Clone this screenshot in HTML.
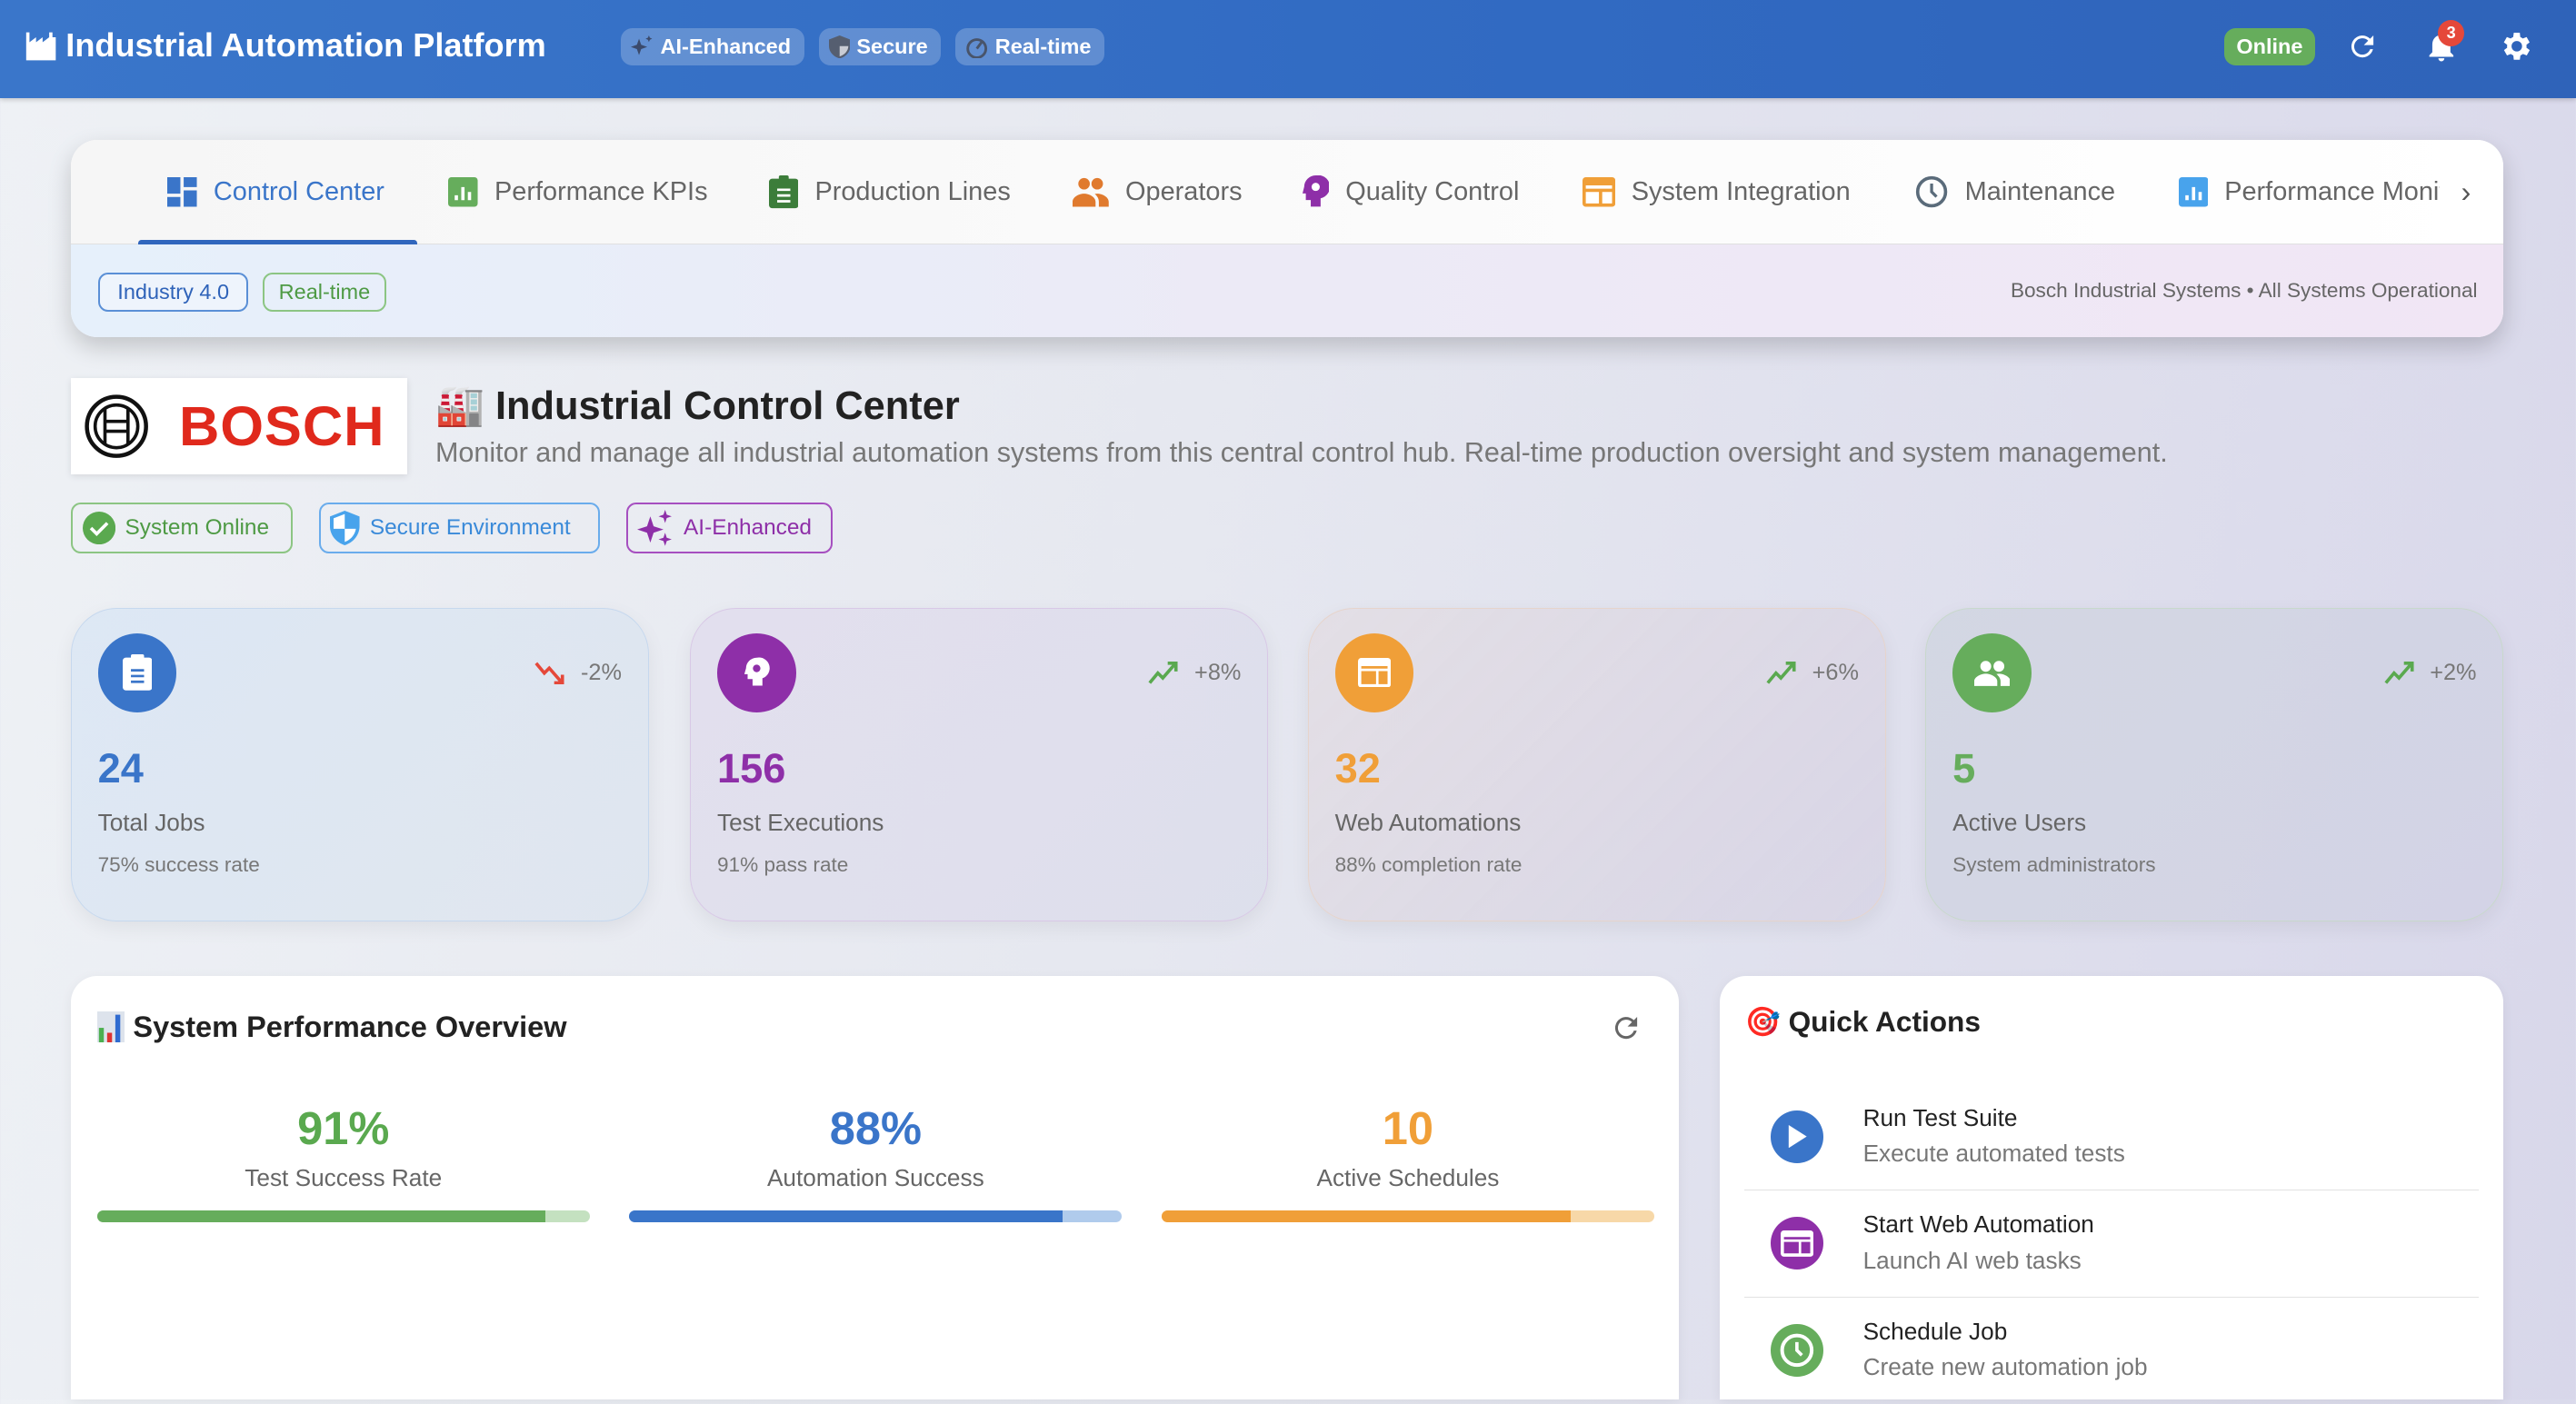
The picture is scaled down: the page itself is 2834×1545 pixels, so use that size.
<!DOCTYPE html>
<html><head><meta charset="utf-8"><style>
html{zoom:1.80740}
*{box-sizing:border-box;margin:0;padding:0}
body{width:1568px;height:852px;overflow:hidden;font-family:"Liberation Sans","DejaVu Sans",sans-serif;background:linear-gradient(100deg,#eef1f5 0%,#e6e8f0 45%,#d8d7ea 100%);position:relative}
.abs{position:absolute}
.hdr{left:0;top:0;width:1568px;height:60px;background:linear-gradient(90deg,#3a76ca,#316ac2 60%,#2f63b9);box-shadow:0 1px 3px rgba(0,0,0,.2)}
.chips{position:absolute;left:378px;top:17px;display:flex;gap:9px}
.chip{height:23px;border-radius:7px;background:rgba(255,255,255,.22);color:#fff;font-size:13px;font-weight:bold;display:flex;align-items:center;padding:0 8px 0 6px;gap:4px;white-space:nowrap}
.nav{left:43px;top:85px;width:1481px;height:120px;border-radius:16px;background:#fff;box-shadow:0 6px 14px rgba(0,0,0,.18);overflow:hidden}
.tabs{height:64px;background:linear-gradient(90deg,#f6f6f6,#fff);border-bottom:1px solid #e0e0e0;position:relative}
.tab{position:absolute;top:0;height:64px;display:flex;align-items:center;font-size:16px;color:#666;gap:10px;white-space:nowrap}
.sub{height:56px;background:linear-gradient(90deg,#e6f0fb,#eceaf6 50%,#f1e6f5)}
.tg{position:absolute;top:81px;height:24px;border-radius:6px;font-size:13px;display:flex;align-items:center;justify-content:center}
.badge{position:absolute;top:306px;height:31px;border-radius:6px;font-size:13.5px;display:flex;align-items:center;gap:6px;padding-left:6px;white-space:nowrap}
.card{position:absolute;top:370px;width:352px;height:191px;border-radius:28px;box-shadow:0 4px 12px rgba(0,0,0,.06)}
.ic{position:absolute;left:16px;top:15px;width:48px;height:48px;border-radius:50%;display:flex;align-items:center;justify-content:center}
.tr{position:absolute;right:16px;top:31px;font-size:14px;color:#777;display:flex;align-items:center;gap:8px}
.num{position:absolute;left:16px;top:83px;font-size:25px;font-weight:bold}
.lab{position:absolute;left:16px;top:122px;font-size:14.5px;color:#666}
.sl{position:absolute;left:16px;top:149px;font-size:12.5px;color:#777}
.panel{position:absolute;top:594px;background:#fff;border-radius:16px;height:258px;border-bottom-left-radius:0;border-bottom-right-radius:0;box-shadow:0 2px 8px rgba(0,0,0,.06)}
.col{position:absolute;top:672px;width:300px;text-align:center}
.col .n{font-size:28px;font-weight:bold;line-height:30px}
.col .l{font-size:14.5px;color:#666;margin-top:7px}
.bar{position:absolute;top:737px;width:300px;height:7px;border-radius:4px;overflow:hidden}
.qa{position:absolute;left:1062px;width:447px;height:65px}
.qa .c{position:absolute;left:16px;top:16px;width:32px;height:32px;border-radius:50%;display:flex;align-items:center;justify-content:center}
.qa .t{position:absolute;left:72px;top:12px;font-size:14.5px;color:#222}
.qa .s{position:absolute;left:72px;top:34px;font-size:14.5px;color:#777}
</style></head><body>
<div class="abs hdr">
 <div class="abs" style="left:15px;top:16px;display:flex;align-items:center;gap:5px;color:#fff;font-size:20px;font-weight:bold">
  <svg width="20" height="20" viewBox="0 0 20 20"><path d="M1 19V2h2v6l4-3v3l4-3v3l4-3V2h2v3h2v14z" fill="#fff"/></svg>Industrial Automation Platform</div>
 <div class="chips">
 <div class="chip"><svg width="14" height="14" viewBox="0 0 14 14"><path d="M5 2l1.3 3.7L10 7l-3.7 1.3L5 12 3.7 8.3 0 7l3.7-1.3zM11 0l.6 1.4L13 2l-1.4.6L11 4l-.6-1.4L9 2l1.4-.6z" fill="#3b4a6b"/></svg>AI-Enhanced</div>
 <div class="chip"><svg width="13" height="14" viewBox="0 0 13 14"><path d="M6.5 0L0 2.5v4c0 3.5 2.8 6.6 6.5 7.5 3.7-.9 6.5-4 6.5-7.5v-4z" fill="#555e70"/><path d="M6.5 1.2v11.6c2.9-.9 5.2-3.3 5.3-6.3H6.5z" fill="#c9ccd4"/></svg>Secure</div>
 <div class="chip"><svg width="14" height="14" viewBox="0 0 14 14"><circle cx="7" cy="8" r="5.5" fill="none" stroke="#48546a" stroke-width="1.6"/><path d="M7 8l3-4" stroke="#48546a" stroke-width="1.6"/></svg>Real-time</div>
 </div>
 <div class="chip abs" style="left:1354px;top:17px;width:55px;background:#66ad5c;justify-content:center;padding:0">Online</div>
 <svg class="abs" style="left:1428px;top:18px" width="20" height="20" viewBox="0 0 24 24"><path d="M17.6 6.4A8 8 0 1 0 19.7 14h-2.1a6 6 0 1 1-1.4-6.2L13 11h7V4z" fill="#fff"/></svg>
 <svg class="abs" style="left:1475px;top:17px" width="22" height="22" viewBox="0 0 24 24"><path d="M12 22a2 2 0 0 0 2-2h-4a2 2 0 0 0 2 2zm6-6v-5c0-3.1-1.6-5.6-4.5-6.3V4a1.5 1.5 0 0 0-3 0v.7C7.6 5.4 6 7.9 6 11v5l-2 2v1h16v-1z" fill="#fff"/></svg>
 <div class="abs" style="left:1484px;top:12px;width:16px;height:16px;border-radius:50%;background:#e5483a;color:#fff;font-size:10px;font-weight:bold;text-align:center;line-height:16px">3</div>
 <svg class="abs" style="left:1521px;top:17px" width="22" height="22" viewBox="0 0 24 24"><path d="M19.4 13a7.5 7.5 0 0 0 0-2l2.1-1.6-2-3.5-2.5 1a7.6 7.6 0 0 0-1.7-1L15 3h-4l-.4 2.9a7.6 7.6 0 0 0-1.7 1l-2.5-1-2 3.5L6.6 11a7.5 7.5 0 0 0 0 2l-2.1 1.6 2 3.5 2.5-1a7.6 7.6 0 0 0 1.7 1L11 21h4l.4-2.9a7.6 7.6 0 0 0 1.7-1l2.5 1 2-3.5zM13 15.5a3.5 3.5 0 1 1 0-7 3.5 3.5 0 0 1 0 7z" fill="#fff" transform="translate(-1 0)"/></svg>
</div>

<div class="abs nav">
 <div class="tabs">
  <div class="tab" style="left:59px;color:#3a75c9"><svg width="18" height="18" viewBox="0 0 18 18"><path d="M0 0h8v10H0zM10 0h8v6h-8zM10 8h8v10h-8zM0 12h8v6H0z" fill="#3a75c9"/></svg>Control Center</div>
  <div class="abs" style="left:41px;top:61px;width:170px;height:3px;background:#3066bd;border-radius:2px 2px 0 0"></div>
  <div class="tab" style="left:230px"><svg width="18" height="18" viewBox="0 0 18 18"><rect width="18" height="18" rx="2" fill="#66ad5c"/><path d="M4 14v-3h2v3zM8 14V6h2v8zM12 14V9h2v5z" fill="#fff"/></svg>Performance KPIs</div>
  <div class="tab" style="left:425px"><svg width="18" height="20" viewBox="0 0 18 20"><rect y="2" width="18" height="18" rx="2" fill="#3c7d3a"/><rect x="6" y="0" width="6" height="4" rx="1" fill="#3c7d3a"/><path d="M5 8h8v1.5H5zM5 11.5h8V13H5zM5 15h8v1.5H5z" fill="#fff"/></svg>Production Lines</div>
  <div class="tab" style="left:610px"><svg width="22" height="18" viewBox="0 0 22 18"><circle cx="7" cy="4" r="3.5" fill="#e07a2e"/><circle cx="15" cy="4" r="3.5" fill="#e07a2e"/><path d="M0 18v-3c0-3 4-5 7-5s7 2 7 5v3zM15 10c3 0 7 2 7 5v3h-6v-3c0-2-1-3.5-2.5-4.8z" fill="#e07a2e"/></svg>Operators</div>
  <div class="tab" style="left:750px"><svg width="16" height="20" viewBox="0 0 16 20"><path d="M8 0a7 7 0 0 0-7 7l-1 4h2v4h3v4h6v-5a7 7 0 0 0-3-14z" fill="#8e2fa8"/><circle cx="8" cy="7" r="2.5" fill="#fff"/></svg>Quality Control</div>
  <div class="tab" style="left:920px"><svg width="20" height="18" viewBox="0 0 20 18"><rect width="20" height="18" rx="2" fill="#f09f38"/><path d="M2 5h16v2H2zM2 9h8v7H2zM12 9h6v7h-6z" fill="#fff"/></svg>System Integration</div>
  <div class="tab" style="left:1123px"><svg width="20" height="20" viewBox="0 0 20 20"><circle cx="10" cy="10" r="8.5" fill="none" stroke="#5a6b7a" stroke-width="2"/><path d="M10 5v5l3 3" fill="none" stroke="#5a6b7a" stroke-width="1.8"/></svg>Maintenance</div>
  <div class="tab" style="left:1283px"><svg width="18" height="18" viewBox="0 0 18 18"><rect width="18" height="18" rx="2" fill="#48a3ec"/><path d="M4 14v-3h2v3zM8 14V6h2v8zM12 14V9h2v5z" fill="#fff"/></svg><span style="width:131px;overflow:hidden;white-space:nowrap">Performance Monitoring</span></div>
  <div class="tab" style="left:1455px;font-size:18px;color:#555">›</div>
 </div>
 <div class="sub"></div>
 <div class="tg" style="left:17px;width:91px;border:1.5px solid #5a8fd6;color:#2f63b9;background:#eef4fc">Industry 4.0</div>
 <div class="tg" style="left:117px;width:75px;border:1.5px solid #8cc583;color:#4e9a44">Real-time</div>
 <div class="abs" style="right:16px;top:85px;font-size:12.5px;color:#666">Bosch Industrial Systems • All Systems Operational</div>
</div>

<div class="abs" style="left:43px;top:230px;width:205px;height:59px;background:#fff;box-shadow:0 1px 4px rgba(0,0,0,.1);display:flex;align-items:center">
 <svg style="margin-left:8px" width="40" height="40" viewBox="0 0 40 40"><circle cx="20" cy="20" r="18" fill="none" stroke="#111" stroke-width="2.5"/><circle cx="20" cy="20" r="13" fill="none" stroke="#111" stroke-width="2"/><path d="M13 9v22M27 9v22M13 17h14M13 23h14" stroke="#111" stroke-width="2" fill="none"/></svg>
 <span style="margin-left:18px;font-size:34px;font-weight:bold;color:#e0291c;letter-spacing:.5px">BOSCH</span></div>
<div class="abs" style="left:265px;top:233px;font-size:24px;font-weight:bold;color:#222">🏭 Industrial Control Center</div>
<div class="abs" style="left:265px;top:266px;font-size:16.9px;color:#777">Monitor and manage all industrial automation systems from this central control hub. Real-time production oversight and system management.</div>

<div class="badge" style="left:43px;width:135px;border:1.5px solid #8cc583;color:#4e9a44"><svg width="20" height="20" viewBox="0 0 20 20"><circle cx="10" cy="10" r="10" fill="#5aa94f"/><path d="M5 10l3.5 3.5L15 7" fill="none" stroke="#fff" stroke-width="2"/></svg>System Online</div>
<div class="badge" style="left:194px;width:171px;border:1.5px solid #6aacec;color:#3a8ad9"><svg width="18" height="21" viewBox="0 0 18 21"><path d="M9 0L0 3.5v6C0 15 4 19.5 9 21c5-1.5 9-6 9-11.5v-6z" fill="#48a3ec"/><path d="M9 2v9H2.2V4.6zM9 11h6.8c-.6 3.8-3.3 6.8-6.8 8z" fill="#fff"/></svg>Secure Environment</div>
<div class="badge" style="left:381px;width:126px;border:1.5px solid #a64fc0;color:#8e2fa8"><svg width="22" height="22" viewBox="0 0 22 22"><path d="M8 4l2 6 6 2-6 2-2 6-2-6-6-2 6-2zM17 0l1 3 3 1-3 1-1 3-1-3-3-1 3-1zM17 14l1 3 3 1-3 1-1 3-1-3-3-1 3-1z" fill="#8e2fa8"/></svg>AI-Enhanced</div>

<div class="card" style="left:43px;background:linear-gradient(135deg,rgba(214,228,244,.7),rgba(220,228,238,.7));border:1px solid #c6d8ee">
 <div class="ic" style="background:#3a75c9"><svg width="18" height="22" viewBox="0 0 18 22"><rect y="2" width="18" height="20" rx="2" fill="#fff"/><rect x="5" y="0" width="8" height="4" rx="1" fill="#fff"/><path d="M5 9h8v1.5H5zM5 12.5h8V14H5zM5 16h8v1.5H5z" fill="#3a75c9"/></svg></div>
 <div class="tr"><svg width="20" height="14" viewBox="0 0 20 14"><path d="M1 1l5 6 3-3 7 8M12 13h5V8" fill="none" stroke="#e5483a" stroke-width="2"/></svg>-2%</div>
 <div class="num" style="color:#3a75c9">24</div><div class="lab">Total Jobs</div><div class="sl">75% success rate</div></div>
<div class="card" style="left:420px;background:linear-gradient(135deg,rgba(224,218,236,.7),rgba(218,220,234,.7));border:1px solid #d8c8e6">
 <div class="ic" style="background:#8e2fa8"><svg width="16" height="20" viewBox="0 0 16 20"><path d="M8 1a6.5 6.5 0 0 0-6.5 6.5L.5 11h2v3h3v4h6v-4.5A6.5 6.5 0 0 0 8 1z" fill="#fff"/><circle cx="8" cy="7.5" r="2.3" fill="#8e2fa8"/></svg></div>
 <div class="tr"><svg width="20" height="14" viewBox="0 0 20 14"><path d="M1 13l5-6 3 3 7-8M12 1h5v5" fill="none" stroke="#5aa94f" stroke-width="2"/></svg>+8%</div>
 <div class="num" style="color:#8e2fa8">156</div><div class="lab">Test Executions</div><div class="sl">91% pass rate</div></div>
<div class="card" style="left:796px;background:linear-gradient(135deg,rgba(226,218,222,.6),rgba(214,210,228,.7));border:1px solid #e6d4cc">
 <div class="ic" style="background:#f09f38"><svg width="20" height="18" viewBox="0 0 20 18"><rect width="20" height="18" rx="2" fill="#fff"/><path d="M2 5h16v1.5H2zM2 8h9v8H2zM12.5 8H18v8h-5.5z" fill="#f09f38"/></svg></div>
 <div class="tr"><svg width="20" height="14" viewBox="0 0 20 14"><path d="M1 13l5-6 3 3 7-8M12 1h5v5" fill="none" stroke="#5aa94f" stroke-width="2"/></svg>+6%</div>
 <div class="num" style="color:#f09f38">32</div><div class="lab">Web Automations</div><div class="sl">88% completion rate</div></div>
<div class="card" style="left:1172px;background:linear-gradient(135deg,rgba(206,212,222,.7),rgba(208,208,228,.7));border:1px solid #c8d8cc">
 <div class="ic" style="background:#66ad5c"><svg width="22" height="16" viewBox="0 0 22 16"><circle cx="7" cy="4" r="3.3" fill="#fff"/><circle cx="15" cy="4" r="3.3" fill="#fff"/><path d="M0 16v-3c0-2.5 4-4.5 7-4.5s7 2 7 4.5v3zM15 8.5c3 0 7 2 7 4.5v3h-6v-3c0-1.5-1-3-2.5-4.3z" fill="#fff"/></svg></div>
 <div class="tr"><svg width="20" height="14" viewBox="0 0 20 14"><path d="M1 13l5-6 3 3 7-8M12 1h5v5" fill="none" stroke="#5aa94f" stroke-width="2"/></svg>+2%</div>
 <div class="num" style="color:#66ad5c">5</div><div class="lab">Active Users</div><div class="sl">System administrators</div></div>

<div class="panel" style="left:43px;width:979px"></div>
<div class="abs" style="left:59px;top:615px;font-size:18px;font-weight:600;color:#222;display:flex;align-items:center;gap:5px"><svg width="17" height="19" viewBox="0 0 17 19"><rect width="17" height="19" fill="#dde3ec"/><rect x="1" y="10" width="3" height="9" fill="#4caf50"/><rect x="6" y="13" width="3" height="6" fill="#d33"/><rect x="11" y="2" width="3" height="17" fill="#2f6bd0"/></svg>System Performance Overview</div>
<svg class="abs" style="left:980px;top:616px" width="20" height="20" viewBox="0 0 24 24"><path d="M17.6 6.4A8 8 0 1 0 19.7 14h-2.1a6 6 0 1 1-1.4-6.2L13 11h7V4z" fill="#666"/></svg>
<div class="col" style="left:59px"><div class="n" style="color:#5aa94f">91%</div><div class="l">Test Success Rate</div></div>
<div class="col" style="left:383px"><div class="n" style="color:#3a75c9">88%</div><div class="l">Automation Success</div></div>
<div class="col" style="left:707px"><div class="n" style="color:#f09f38">10</div><div class="l">Active Schedules</div></div>
<div class="bar" style="left:59px;background:#c4e1c0"><div style="width:91%;height:100%;background:#66ad5c"></div></div>
<div class="bar" style="left:383px;background:#b0cbec"><div style="width:88%;height:100%;background:#3a75c9"></div></div>
<div class="bar" style="left:707px;background:#f7d8a8"><div style="width:83%;height:100%;background:#f09f38"></div></div>

<div class="panel" style="left:1047px;width:477px"></div>
<div class="abs" style="left:1062px;top:612px;font-size:17.5px;font-weight:600;color:#222">🎯 Quick Actions</div>
<div class="qa" style="top:660px;border-bottom:1px solid #e2e2e2"><div class="c" style="background:#3a75c9"><svg width="12" height="14" viewBox="0 0 12 14"><path d="M1 0l11 7-11 7z" fill="#fff"/></svg></div><div class="t">Run Test Suite</div><div class="s">Execute automated tests</div></div>
<div class="qa" style="top:725px;border-bottom:1px solid #e2e2e2"><div class="c" style="background:#8e2fa8"><svg width="20" height="16" viewBox="0 0 20 16"><rect width="20" height="16" rx="2" fill="#fff"/><path d="M2 4h16v1.5H2zM2 7h9v7H2zM12.5 7H18v7h-5.5z" fill="#8e2fa8"/></svg></div><div class="t">Start Web Automation</div><div class="s">Launch AI web tasks</div></div>
<div class="qa" style="top:790px"><div class="c" style="background:#66ad5c"><svg width="22" height="22" viewBox="0 0 22 22"><circle cx="11" cy="11" r="9" fill="none" stroke="#fff" stroke-width="2.2"/><path d="M11 6v5l3 3" fill="none" stroke="#fff" stroke-width="2"/></svg></div><div class="t">Schedule Job</div><div class="s">Create new automation job</div></div>
</body></html>
